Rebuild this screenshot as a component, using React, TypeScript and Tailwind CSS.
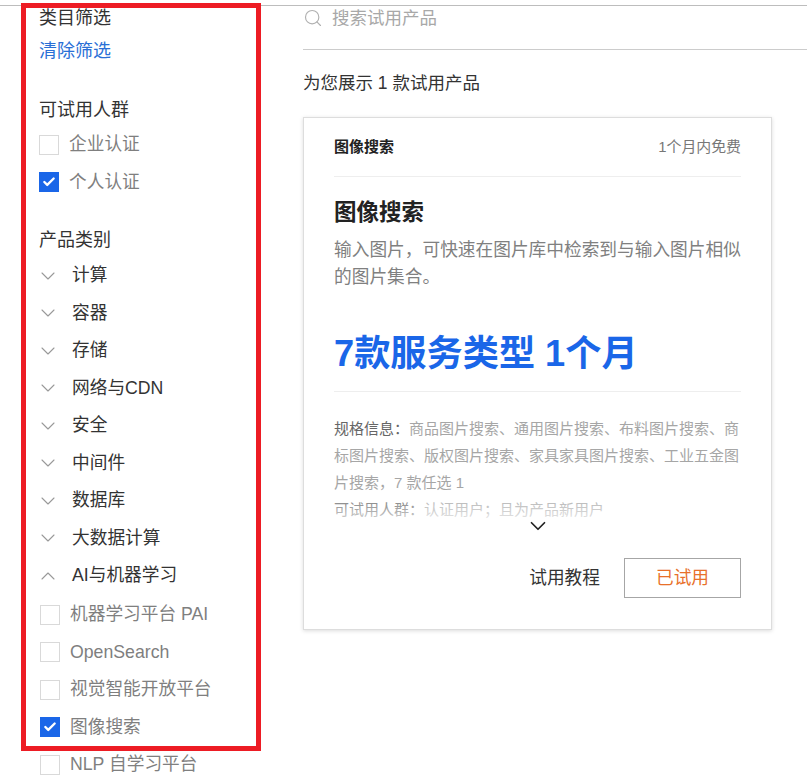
import { Search, Check, ChevronDown, ChevronUp } from 'lucide-react'

const categories = ['计算', '容器', '存储', '网络与CDN', '安全', '中间件', '数据库', '大数据计算']

const aiItems = [
  { label: '机器学习平台 PAI', checked: false },
  { label: 'OpenSearch', checked: false },
  { label: '视觉智能开放平台', checked: false },
  { label: '图像搜索', checked: true },
  { label: 'NLP 自学习平台', checked: false },
]

function CheckRow({ label, checked, inset }: { label: string; checked: boolean; inset?: boolean }) {
  return (
    <div className={`flex h-[37.5px] items-center ${inset ? 'pl-px' : ''}`}>
      {checked ? (
        <span className="flex h-5 w-5 items-center justify-center bg-[#1a66e8]">
          <Check size={14} strokeWidth={4} className="text-white" />
        </span>
      ) : (
        <span className="h-5 w-5 border border-[#d9d9d9] bg-white" />
      )}
      <span className="ml-[10px] text-[#7f7f7f]">{label}</span>
    </div>
  )
}

function CategoryRow({ label, open }: { label: string; open?: boolean }) {
  const Icon = open ? ChevronUp : ChevronDown
  return (
    <div className="flex h-[37.5px] items-center">
      <span className="flex w-[18px] justify-center">
        <Icon size={24} strokeWidth={1.1} className="shrink-0 text-[#999999]" />
      </span>
      <span className="ml-[15px] text-[#333333]">{label}</span>
    </div>
  )
}

export default function App() {
  return (
    <div className="relative h-[782px] w-[807px] overflow-hidden bg-white pt-[5px] font-['Liberation_Sans','Noto_Sans_CJK_SC',sans-serif] text-[17.7px]">
      <div className="h-px bg-[#bdbdbd]" />
      <div className="flex">
        <aside className="w-[303px] shrink-0 pl-[39px]">
          <div className="h-6 text-[18px] leading-6 text-[#333333]">类目筛选</div>
          <div className="mt-[9px] h-6 text-[18px] leading-6 text-[#2a6fd6]">清除筛选</div>
          <div className="mt-[35px] h-6 text-[18px] leading-6 text-[#333333]">可试用人群</div>
          <div className="mt-[4px]">
            <CheckRow label="企业认证" checked={false} />
            <CheckRow label="个人认证" checked />
          </div>
          <div className="mt-[27px] h-6 text-[18px] leading-6 text-[#333333]">产品类别</div>
          <div className="mt-[5px]">
            {categories.map(c => (
              <CategoryRow key={c} label={c} />
            ))}
            <CategoryRow label="AI与机器学习" open />
          </div>
          <div className="mt-[1.5px]">
            {aiItems.map(item => (
              <CheckRow key={item.label} label={item.label} checked={item.checked} inset />
            ))}
          </div>
        </aside>

        <main className="min-w-0 flex-1">
          <div className="flex h-[44px] items-start border-b border-[#cccccc]">
            <div className="flex h-[24px] items-center">
              <Search size={20} strokeWidth={1.4} className="text-[#b0b0b0]" />
              <span className="ml-[9px] text-[17.5px] text-[#a8a8a8]">搜索试用产品</span>
            </div>
          </div>
          <div className="mt-[21px] h-6 text-[17.5px] leading-6 text-[#333333]">为您展示 1 款试用产品</div>
          <section className="mt-[22px] h-[513px] w-[469px] border border-[#dddddd] bg-white pl-[30px] pr-[30px] shadow-[0_1px_4px_rgba(0,0,0,0.14)]">
            <div className="flex h-[59px] items-center justify-between border-b border-[#eeeeee]">
              <span className="text-[15px] font-bold text-[#222222]">图像搜索</span>
              <span className="text-[14.9px] text-[#777777]">1个月内免费</span>
            </div>
            <h2 className="mt-[21px] h-[30px] text-[22.5px] font-bold leading-[30px] text-[#222222]">图像搜索</h2>
            <p className="mt-[9px] mr-[-2px] text-[#808080] leading-[27px]">
              输入图片，可快速在图片库中检索到与输入图片相似的图片集合。
            </p>
            <div className="mt-[38px] h-[50px] text-[36.2px] font-bold leading-[50px] text-[#1a66e8]">7款服务类型 1个月</div>
            <div className="mt-[12px] border-t border-[#eeeeee] pt-[23px]">
              <div className="relative mr-[-1px] h-[108px] text-[15px] leading-[27px] text-[#a6a6a6]">
                <p>
                  <span className="text-[#666666]">规格信息：</span>
                  商品图片搜索、通用图片搜索、布料图片搜索、商标图片搜索、版权图片搜索、家具家具图片搜索、工业五金图片搜索，7 款任选 1
                </p>
                <p>
                  <span className="text-[#666666]">可试用人群：</span>
                  认证用户；且为产品新用户
                </p>
                <div className="absolute inset-x-0 bottom-0 h-[30px] bg-gradient-to-b from-white/0 to-white/80" />
                <ChevronDown
                  size={26}
                  strokeWidth={1.6}
                  className="absolute bottom-[-16px] left-[191px] text-[#222222]"
                />
              </div>
            </div>
            <div className="mt-[35px] flex items-center justify-end">
              <span className="text-[#333333]">试用教程</span>
              <button className="ml-[24px] h-10 w-[117px] border border-[#a6a6a6] text-[#e8702a]">已试用</button>
            </div>
          </section>
        </main>
      </div>
      {/* annotation box drawn over the sidebar */}
      <div className="pointer-events-none absolute left-[21px] top-[3px] h-[748px] w-[240px] border-[5px] border-[#ed1c24]" />
    </div>
  )
}
